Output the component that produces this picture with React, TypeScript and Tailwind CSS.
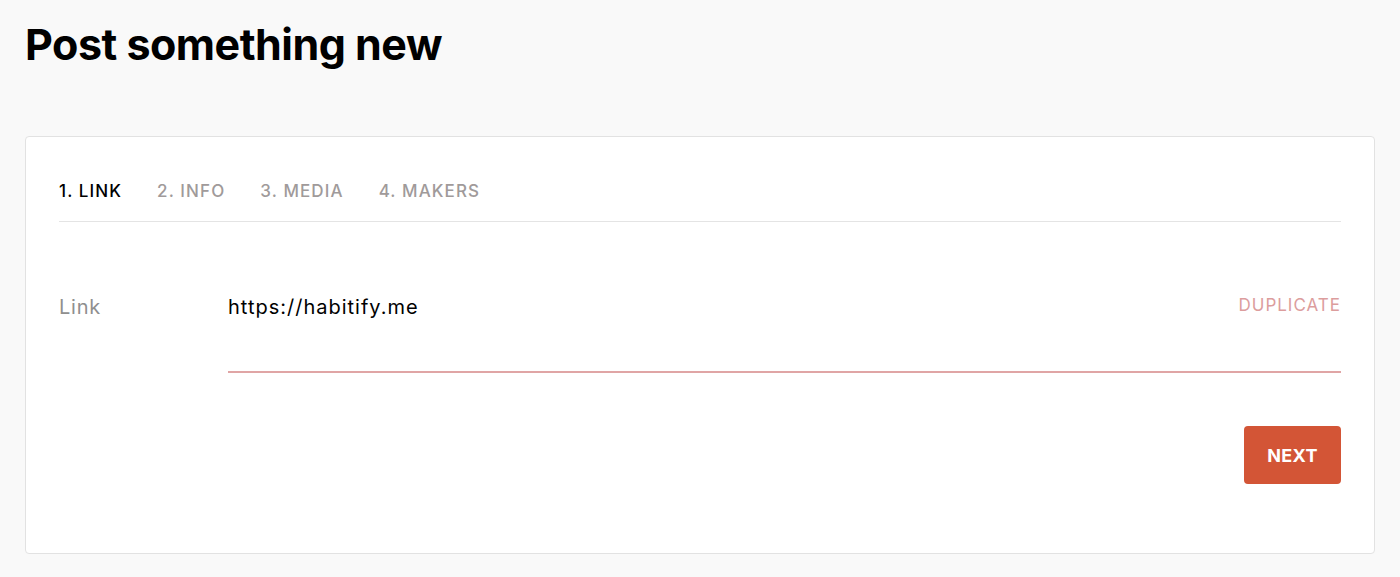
import { useState } from "react";

const tabs = ["1. LINK", "2. INFO", "3. MEDIA", "4. MAKERS"];

const App = () => {
	const [active] = useState<number>(0);
	const [link, setLink] = useState<string>("https://habitify.me");

	return (
		<div
			className="min-h-[577px] bg-[#f9f9f9] px-[25px] pt-[21px] pb-6"
			style={{ fontFamily: "Inter, 'Noto Sans', sans-serif" }}
		>
			<h1 className="text-[43px] leading-[46px] font-bold text-black tracking-[-0.5px]">
				Post something new
			</h1>

			<div className="mt-[69px] bg-white border border-[#e2e2e2] rounded-[4px] px-[33px] pt-[42px] pb-[69px]">
				<div className="flex gap-x-[35px] border-b border-[#e4e4e4] pb-[18px]">
					{tabs.map((tab, i) => (
						<button
							key={tab}
							className={
								i === active
									? "text-[17px] leading-6 font-medium tracking-[1.1px] text-black"
									: "text-[17px] leading-6 font-medium tracking-[1.1px] text-[#a09a9a]"
							}
						>
							{tab}
						</button>
					))}
				</div>

				<div className="flex mt-[63px]">
					<label className="w-[169px] text-[20px] leading-[44px] tracking-[0.8px] text-[#8f8f8f]">
						Link
					</label>
					<div className="flex-1 flex items-start border-b-2 border-[#e0a5a5] pb-[42px]">
						<input
							value={link}
							onChange={(e) => setLink(e.target.value)}
							className="flex-1 text-[20px] leading-[44px] tracking-[1px] text-black outline-none bg-transparent"
						/>
						<button className="text-[17px] leading-[40px] text-[#dc9d9d] tracking-[1px]">
							DUPLICATE
						</button>
					</div>
				</div>

				<div className="flex justify-end mt-[53px]">
					<button className="w-[97px] h-[58px] rounded-[4px] bg-[#d35536] text-white text-[18px] font-bold tracking-[0.3px]">
						NEXT
					</button>
				</div>
			</div>
		</div>
	);
};

export default App;
